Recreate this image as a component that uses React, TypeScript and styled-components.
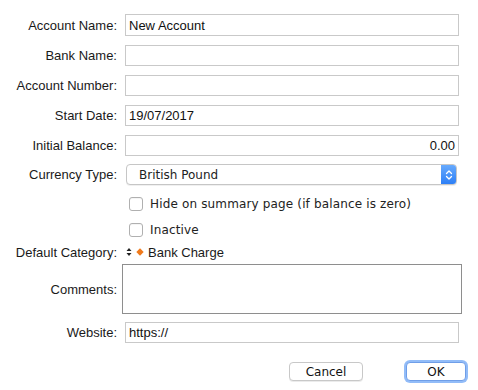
import React from "react";
import styled, { createGlobalStyle } from "styled-components";

const Global = createGlobalStyle`
  html, body { margin: 0; padding: 0; background: #ffffff; }
  body { font-family: "Liberation Sans", Arial, sans-serif; font-size: 13px; color: #1a1a1a; }
`;

const Form = styled.div`
  width: 478px;
  height: 390px;
  box-sizing: border-box;
  padding-top: 14px;
  display: flex;
  flex-direction: column;
`;

const Row = styled.div<{ $mt?: number; $h?: number }>`
  display: grid;
  grid-template-columns: 117px 334px;
  column-gap: 8px;
  align-items: center;
  margin-top: ${(p) => p.$mt ?? 0}px;
  height: ${(p) => (p.$h ? `${p.$h}px` : "auto")};
`;

const Label = styled.label`
  text-align: right;
  font-family: "Liberation Sans", Arial, sans-serif;
  font-size: 13px;
  color: #1a1a1a;
  white-space: nowrap;
`;

const TextInput = styled.div<{ $align?: string; $h?: number }>`
  box-sizing: border-box;
  height: ${(p) => p.$h ?? 21}px;
  border: 1px solid #c9c9c9;
  background: #fff;
  padding: 0 3px;
  display: flex;
  align-items: center;
  justify-content: ${(p) => (p.$align === "right" ? "flex-end" : "flex-start")};
  font-size: 13px;
  color: #111;
  white-space: nowrap;
`;

const Select = styled.div`
  box-sizing: border-box;
  width: 331px;
  height: 21px;
  border: 1px solid #c6c6c6;
  border-radius: 4px;
  background: #fff;
  display: flex;
  align-items: center;
  justify-content: space-between;
  box-shadow: 0 1px 0 rgba(0, 0, 0, 0.06);
  overflow: hidden;
  margin-left: 1px;
`;

const SelectText = styled.span`
  font-family: "DejaVu Sans", "Lucida Grande", sans-serif;
  font-size: 12px;
  color: #222;
  padding-left: 12px;
`;

const Stepper = styled.div`
  width: 16px;
  height: 21px;
  margin-right: -1px;
  background: linear-gradient(#6aacfd, #2a7df6);
  border-radius: 0 4px 4px 0;
  display: flex;
  align-items: center;
  justify-content: center;
`;

const CheckRow = styled.div`
  display: flex;
  align-items: center;
  gap: 7px;
  padding-left: 4px;
`;

const Box = styled.span`
  box-sizing: border-box;
  width: 14px;
  height: 14px;
  border: 1px solid #b0b0b0;
  border-radius: 3px;
  background: #fff;
  box-shadow: inset 0 1px 0 rgba(0, 0, 0, 0.04);
`;

const CheckText = styled.span`
  font-family: "DejaVu Sans", "Lucida Grande", sans-serif;
  font-size: 12px;
  color: #222;
  letter-spacing: 0.15px;
  white-space: nowrap;
`;

const Category = styled.div`
  display: flex;
  align-items: center;
  gap: 4px;
  padding-left: 1px;
  font-size: 13px;
`;

const Comments = styled.div`
  box-sizing: border-box;
  width: 340px;
  height: 50px;
  margin-left: -3px;
  border: 1px solid #8e8e8e;
  background: #fff;
`;

const Buttons = styled.div`
  display: flex;
  justify-content: flex-end;
  align-items: center;
  gap: 43px;
  padding-right: 12px;
  margin-top: 19px;
`;

const Button = styled.div<{ $default?: boolean; $w: number }>`
  box-sizing: border-box;
  width: ${(p) => p.$w}px;
  height: 19px;
  border: 1px solid ${(p) => (p.$default ? "#6f9ee8" : "#c8c8c8")};
  border-radius: 4px;
  background: #fff;
  display: flex;
  align-items: center;
  justify-content: center;
  font-family: "DejaVu Sans", "Lucida Grande", sans-serif;
  font-size: 12px;
  color: #111;
  box-shadow: ${(p) =>
    p.$default
      ? "0 0 0 2px rgba(110, 165, 245, 0.75)"
      : "0 1px 0 rgba(0,0,0,0.08)"};
`;

export default function App() {
  return (
    <>
      <Global />
      <Form>
        <Row>
          <Label>Account Name:</Label>
          <TextInput $h={22}>New Account</TextInput>
        </Row>
        <Row $mt={9}>
          <Label>Bank Name:</Label>
          <TextInput />
        </Row>
        <Row $mt={9}>
          <Label>Account Number:</Label>
          <TextInput />
        </Row>
        <Row $mt={9}>
          <Label>Start Date:</Label>
          <TextInput>19/07/2017</TextInput>
        </Row>
        <Row $mt={9}>
          <Label>Initial Balance:</Label>
          <TextInput $align="right">0.00</TextInput>
        </Row>
        <Row $mt={8}>
          <Label>Currency Type:</Label>
          <Select>
            <SelectText>British Pound</SelectText>
            <Stepper>
              <svg width="8" height="12" viewBox="0 0 8 12">
                <path d="M1.5 4.5 L4 2 L6.5 4.5 M1.5 7.5 L4 10 L6.5 7.5" stroke="#fff" strokeWidth="1.3" fill="none" strokeLinecap="round" strokeLinejoin="round" />
              </svg>
            </Stepper>
          </Select>
        </Row>
        <Row $mt={12} $h={14}>
          <span />
          <CheckRow>
            <Box />
            <CheckText>Hide on summary page (if balance is zero)</CheckText>
          </CheckRow>
        </Row>
        <Row $mt={12} $h={14}>
          <span />
          <CheckRow>
            <Box />
            <CheckText>Inactive</CheckText>
          </CheckRow>
        </Row>
        <Row $mt={7} $h={16}>
          <Label>Default Category:</Label>
          <Category>
            <svg width="6" height="10" viewBox="0 0 6 10">
              <path d="M0.5 4 L3 1 L5.5 4 Z M0.5 6 L3 9 L5.5 6 Z" fill="#222" />
            </svg>
            <svg width="8" height="8" viewBox="0 0 8 8">
              <path d="M4 0.3 L7.7 4 L4 7.7 L0.3 4 Z" fill="#f07a1c" />
            </svg>
            <span>Bank Charge</span>
          </Category>
        </Row>
        <Row $mt={4}>
          <Label>Comments:</Label>
          <Comments />
        </Row>
        <Row $mt={8}>
          <Label>Website:</Label>
          <TextInput>https://</TextInput>
        </Row>
        <Buttons>
          <Button $w={74}>Cancel</Button>
          <Button $w={60} $default>OK</Button>
        </Buttons>
      </Form>
    </>
  );
}
